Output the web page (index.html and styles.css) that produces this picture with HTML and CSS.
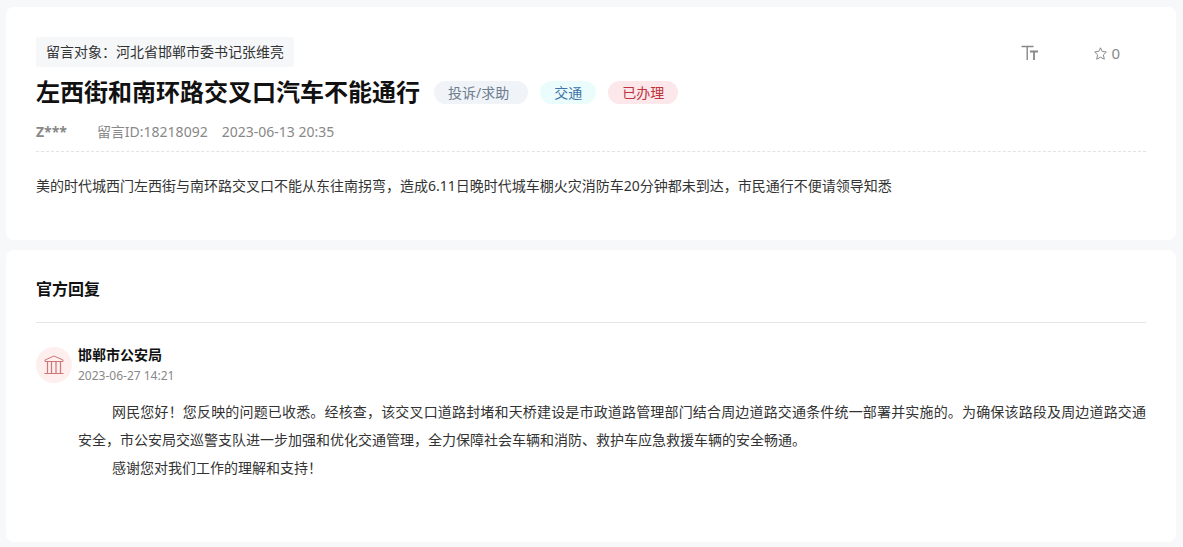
FILE: index.html
```html
<!DOCTYPE html>
<html lang="zh-CN">
<head>
    <meta charset="utf-8">
    <title>左西街和南环路交叉口汽车不能通行</title>
    <link rel="stylesheet" href="styles.css">
</head>
<body>
    <main>
        <article class="card message">
            <div class="topbar">
                <div class="target">留言对象：河北省邯郸市委书记张维亮</div>
                <div class="tools">
                    <button type="button" class="tool" aria-label="字体大小">
                        <svg width="17" height="16" viewBox="0 0 17 16" fill="none" stroke="currentColor" stroke-width="1.4">
                            <path d="M0.5 1.5H12.5M6.2 1.5V15"/>
                            <path d="M9 6.5H17M13 6.5V15" stroke-width="1.8"/>
                        </svg>
                    </button>
                    <button type="button" class="tool" aria-label="收藏 0">
                        <svg width="13" height="13" viewBox="0 0 13 13" fill="none" stroke="currentColor" stroke-linejoin="round">
                            <path d="M6.5 0.8L8.2 4.4L12.3 5L9.4 7.9L10.3 12.2L6.5 10.2L2.7 12.2L3.6 7.9L0.7 5L4.8 4.4Z"/>
                        </svg>
                        <span>0</span>
                    </button>
                </div>
            </div>

            <div class="heading">
                <h1>左西街和南环路交叉口汽车不能通行</h1>
                <span class="badge kind">投诉/求助</span>
                <span class="badge field">交通</span>
                <span class="badge state">已办理</span>
            </div>

            <div class="meta">
                <b class="user">Z***</b>
                <span>留言ID:18218092</span>
                <span>2023-06-13 20:35</span>
            </div>

            <p class="content">美的时代城西门左西街与南环路交叉口不能从东往南拐弯，造成6.11日晚时代城车棚火灾消防车20分钟都未到达，市民通行不便请领导知悉</p>
        </article>

        <section class="card replies">
            <h2>官方回复</h2>
            <div class="reply">
                <div class="avatar">
                    <svg width="20" height="20" viewBox="0 0 20 20" fill="none" stroke="currentColor">
                        <path d="M10 1L19 5V6.5H1V5Z" stroke-linejoin="round"/>
                        <path d="M3.5 6.5V18M7.5 6.5V18M12 6.5V18M16.5 6.5V18" stroke-width="1.2"/>
                        <path d="M0.5 18.5H19.5"/>
                    </svg>
                </div>
                <div class="reply-main">
                    <h3>邯郸市公安局</h3>
                    <div class="time">2023-06-27 14:21</div>
                    <div class="reply-text">
                        <p>网民您好！您反映的问题已收悉。经核查，该交叉口道路封堵和天桥建设是市政道路管理部门结合周边道路交通条件统一部署并实施的。为确保该路段及周边道路交通安全，市公安局交巡警支队进一步加强和优化交通管理，全力保障社会车辆和消防、救护车应急救援车辆的安全畅通。</p>
                        <p>感谢您对我们工作的理解和支持！</p>
                    </div>
                </div>
            </div>
        </section>
    </main>
</body>
</html>
```

FILE: styles.css
```css
* {
    box-sizing: border-box;
}
body {
    margin: 0;
    padding: 7px 7px 5px 6px;
    background: #f7f8fa;
    color: #333;
    font-family: "Noto Sans", "Noto Sans CJK SC", sans-serif;
    font-size: 14px;
}
h1, h2, h3, p {
    margin: 0;
}
.card {
    padding: 30px;
    background: #fff;
    border-radius: 8px;
}
.message {
    padding-bottom: 40px;
}
.topbar {
    display: flex;
    justify-content: space-between;
    align-items: center;
}
.target {
    padding: 0 10px;
    background: #f6f7f9;
    border-radius: 2px;
    line-height: 30px;
}
.tools {
    display: flex;
    align-items: center;
    gap: 56px;
    padding: 2px 26px 0 0;
}
.tool {
    display: flex;
    align-items: center;
    gap: 4px;
    padding: 0;
    border: 0;
    background: none;
    color: #888;
    font: inherit;
    font-size: 15px;
    line-height: 20px;
    cursor: pointer;
}
.heading {
    display: flex;
    align-items: center;
    gap: 12px;
    margin-top: 7px;
}
h1 {
    margin-right: 2px;
    color: #111;
    font-size: 24px;
    line-height: 36px;
}
.badge {
    padding: 0 14px;
    border-radius: 12px;
    line-height: 23px;
    white-space: nowrap;
}
.kind {
    padding-right: 19px;
    background: #f0f3f8;
    color: #6c7d8f;
}
.field {
    background: #ebfcfc;
    color: #3f74a8;
}
.state {
    background: #fce8ea;
    color: #c0323c;
}
.meta {
    display: flex;
    gap: 14px;
    margin-top: 12px;
    padding-bottom: 9px;
    border-bottom: 1px dashed #e3e3e3;
    color: #888;
    line-height: 20px;
}
.user {
    margin-right: 16px;
}
.content {
    margin-top: 20px;
    line-height: 28px;
}
.replies {
    margin-top: 10px;
    padding-bottom: 60px;
}
h2 {
    padding-bottom: 24px;
    border-bottom: 1px solid #e6e6e6;
    color: #111;
    font-size: 16px;
    line-height: 18px;
}
.reply {
    display: flex;
    gap: 6px;
    margin-top: 24px;
}
.avatar {
    display: flex;
    flex: none;
    align-items: center;
    justify-content: center;
    width: 36px;
    height: 36px;
    border-radius: 50%;
    background: #feeeee;
    color: #cf7676;
}
.reply-main {
    flex: 1;
}
h3 {
    color: #111;
    font-size: 14px;
    line-height: 16px;
}
.time {
    margin-top: 4px;
    color: #888;
    font-size: 12px;
    line-height: 18px;
}
.reply-text {
    margin-top: 13px;
    line-height: 28px;
    text-align: justify;
}
.reply-text p {
    text-indent: 34px;
}
```
